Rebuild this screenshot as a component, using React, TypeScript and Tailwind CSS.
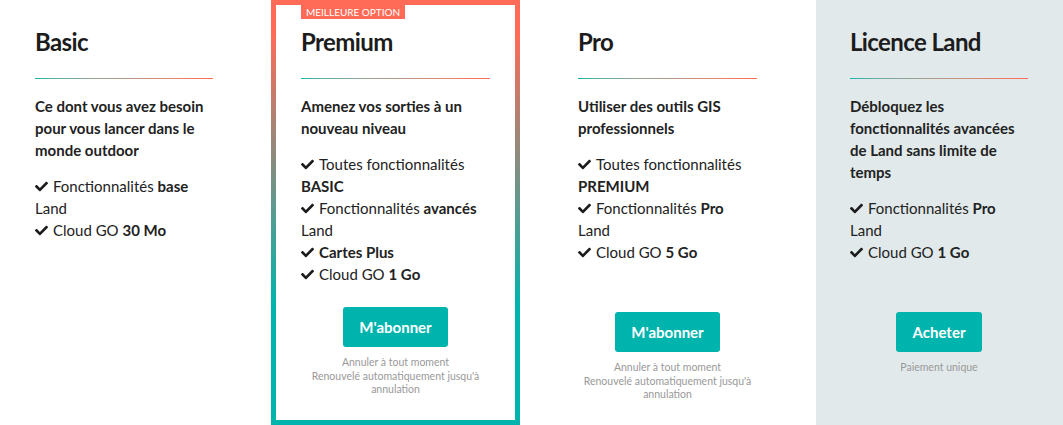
import { FaCheck } from 'react-icons/fa';
import type { ReactNode } from 'react';

type Plan = {
  title: string;
  description: string;
  features: ReactNode[];
};

const plans: Record<string, Plan> = {
  basic: {
    title: 'Basic',
    description: 'Ce dont vous avez besoin pour vous lancer dans le monde outdoor',
    features: [
      <>Fonctionnalités <b>base</b> Land</>,
      <>Cloud GO <b>30 Mo</b></>,
    ],
  },
  premium: {
    title: 'Premium',
    description: 'Amenez vos sorties à un nouveau niveau',
    features: [
      <>Toutes fonctionnalités <b>BASIC</b></>,
      <>Fonctionnalités <b>avancés</b> Land</>,
      <b>Cartes Plus</b>,
      <>Cloud GO <b>1 Go</b></>,
    ],
  },
  pro: {
    title: 'Pro',
    description: 'Utiliser des outils GIS professionnels',
    features: [
      <>Toutes fonctionnalités <b>PREMIUM</b></>,
      <>Fonctionnalités <b>Pro</b> Land</>,
      <>Cloud GO <b>5 Go</b></>,
    ],
  },
  land: {
    title: 'Licence Land',
    description: 'Débloquez les fonctionnalités avancées de Land sans limite de temps',
    features: [
      <>Fonctionnalités <b>Pro</b> Land</>,
      <>Cloud GO <b>1 Go</b></>,
    ],
  },
};

const PlanBody = ({ plan }: { plan: Plan }) => (
  <div className="pt-px">
    <h2 className="text-[24px] leading-[30px] font-bold tracking-[-0.6px] text-[#1c1c1c]">{plan.title}</h2>
    <div className="mt-[21px] h-px bg-linear-to-r from-[#00b4ae] to-[#ff6b57]" />
    <p className="mt-[16px] text-[15px] leading-[22px] font-bold text-[#222]">{plan.description}</p>
    <ul className="mt-[14px] text-[15px] leading-[22px] text-[#222]">
      {plan.features.map((f, i) => (
        <li key={i}>
          <FaCheck className="inline-block mr-[5px] -mt-[3px] text-[#1c1c1c]" size={13} />
          {f}
        </li>
      ))}
    </ul>
  </div>
);

const Cta = ({ label, width, notes }: { label: string; width: string; notes: string[] }) => (
  <div className="flex flex-col items-center">
    <button className={`${width} h-[40px] rounded-[3px] bg-[#00b4ae] text-white text-[15px] font-bold`}>
      {label}
    </button>
    <div className="mt-[9px] text-center text-[10.5px] leading-[13.5px] text-[#999]">
      {notes.map((n, i) => (
        <div key={i}>{n}</div>
      ))}
    </div>
  </div>
);

const subscribeNotes = ['Annuler à tout moment', "Renouvelé automatiquement jusqu'à annulation"];

export default function App() {
  return (
    <div className="flex w-[1063px] h-[425px] bg-white overflow-hidden" style={{ fontFamily: 'Lato, "Open Sans", sans-serif' }}>
      {/* Basic */}
      <div className="w-[271px] pl-[35px] pt-[26px]">
        <div className="w-[178px]">
          <PlanBody plan={plans.basic} />
        </div>
      </div>

      {/* Premium */}
      <div className="relative w-[249px] h-[425px] p-[5px] bg-[linear-gradient(to_bottom,#ff6b57_8%,#00b4ae_72%)]">
        <span className="absolute left-[30px] top-0 h-[19px] px-[5px] pt-[5px] bg-[#ff6b57] text-white text-[10px] leading-[14px] uppercase">
          Meilleure option
        </span>
        <div className="h-full bg-white px-[25px] pt-[21px]">
          <div className="h-[281px]">
            <PlanBody plan={plans.premium} />
          </div>
          <Cta label="M'abonner" width="w-[105px]" notes={subscribeNotes} />
        </div>
      </div>

      {/* Pro */}
      <div className="w-[296px] pl-[58px] pt-[26px]">
        <div className="w-[179px]">
          <div className="h-[286px]">
            <PlanBody plan={plans.pro} />
          </div>
          <Cta label="M'abonner" width="w-[105px]" notes={subscribeNotes} />
        </div>
      </div>

      {/* Licence Land */}
      <div className="flex-1 bg-[#e1e9ea] pl-[34px] pt-[26px]">
        <div className="w-[178px]">
          <div className="h-[286px]">
            <PlanBody plan={plans.land} />
          </div>
          <Cta label="Acheter" width="w-[86px]" notes={['Paiement unique']} />
        </div>
      </div>
    </div>
  );
}
